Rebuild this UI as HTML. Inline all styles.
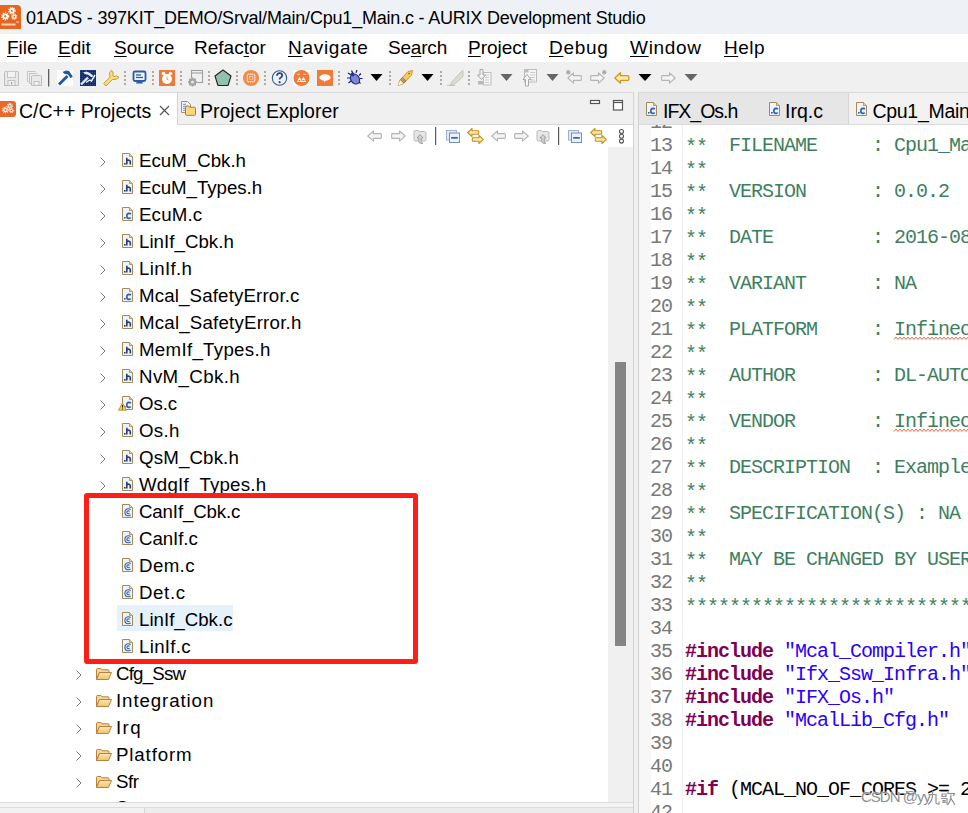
<!DOCTYPE html>
<html><head><meta charset="utf-8">
<style>
*{box-sizing:border-box;margin:0;padding:0}
html,body{width:968px;height:813px;overflow:hidden;background:#fff}
body{position:relative;font-family:"Liberation Sans",sans-serif;color:#000}
.a{position:absolute}
.t{position:absolute;white-space:pre;font-size:18px;line-height:27px;height:27px}
#title{left:0;top:0;width:968px;height:34px;background:#eef2f7}
#menu{left:0;top:34px;width:968px;height:28px;background:#fff}
#tb{left:0;top:62px;width:968px;height:31px;background:#f0f0f0}
.mi{position:absolute;top:0;font-size:19px;line-height:28px;white-space:pre}
.mi u{text-decoration:underline;text-underline-offset:2px;text-decoration-thickness:1px}
.code{position:absolute;font-family:"Liberation Mono",monospace;font-size:20px;letter-spacing:-1px;line-height:23px;white-space:pre;height:23px}
.ln{color:#787878;left:651px}
.cm{color:#3f7f5f}
.kw{color:#7f0055;font-weight:bold}
.st{color:#2a00ff}
.ast{position:relative;top:1.5px}
.clip{position:absolute;left:0;top:0;width:968px;height:813px}
</style></head>
<body>
<svg width="0" height="0" style="position:absolute">
<defs>
 <linearGradient id="gfold" x1="0" y1="0" x2="0" y2="1"><stop offset="0" stop-color="#fbe7b5"/><stop offset="1" stop-color="#f0c468"/></linearGradient>
 <symbol id="ih" viewBox="0 0 12 15">
  <path d="M0.5 0.5H7.5L10.5 3.5V13.5H0.5Z" fill="#eef2fa" stroke="#a48a56" stroke-width="1"/>
  <path d="M7.5 0.5V3.5H10.5" fill="#e6d3a0" stroke="#a48a56" stroke-width="0.8"/>
  <rect x="2" y="10" width="1.6" height="1.6" fill="#23407a"/>
  <path d="M4.8 4.8V11.6M4.8 8Q5.8 7 7 7.2Q8.3 7.4 8.3 8.8V11.6" fill="none" stroke="#23407a" stroke-width="1.6"/>
 </symbol>
 <symbol id="ic" viewBox="0 0 12 15">
  <path d="M0.5 0.5H7.5L10.5 3.5V13.5H0.5Z" fill="#eef2fa" stroke="#a48a56" stroke-width="1"/>
  <path d="M7.5 0.5V3.5H10.5" fill="#e6d3a0" stroke="#a48a56" stroke-width="0.8"/>
  <rect x="2" y="10" width="1.6" height="1.6" fill="#2f5fa6"/>
  <path d="M8.8 7.2Q8.2 6.3 7 6.4Q4.8 6.6 4.8 8.9Q4.8 11.3 7 11.4Q8.2 11.5 8.8 10.6" fill="none" stroke="#2f5fa6" stroke-width="1.6"/>
 </symbol>
 <symbol id="icw" viewBox="0 0 12 15">
  <use href="#ic"/>
 </symbol>
 <symbol id="icc" viewBox="0 0 12 15">
  <path d="M0.5 0.5H7.5L10.5 3.5V13.5H0.5Z" fill="#eef2fa" stroke="#a48a56" stroke-width="1"/>
  <path d="M7.5 0.5V3.5H10.5" fill="#e6d3a0" stroke="#a48a56" stroke-width="0.8"/>
  <path d="M8.6 5.6Q7.7 4.6 6.1 4.7Q2.9 5 2.9 8.3Q2.9 11.7 6.1 11.8Q7.7 11.9 8.6 10.9" fill="none" stroke="#2f5fa6" stroke-width="1.1"/>
  <path d="M7.6 7.3Q7.1 6.8 6.3 6.8Q4.9 6.9 4.9 8.2Q4.9 9.6 6.3 9.7Q7.1 9.7 7.6 9.2" fill="none" stroke="#2f5fa6" stroke-width="1.1"/>
 </symbol>
 <symbol id="ifold" viewBox="0 0 16 12">
  <path d="M0.5 1.5Q0.5 0.5 1.5 0.5H5L6 1.8H12Q13 1.8 13 2.8V4.5H3.5L0.5 11.5Z" fill="#f3d79a" stroke="#b7823c" stroke-width="1"/>
  <path d="M0.5 11.5L3.5 4.5H15.5L12.5 11.5Z" fill="url(#gfold)" stroke="#b7823c" stroke-width="1"/>
 </symbol>
 <symbol id="iarrL" viewBox="0 0 15 12">
  <path d="M0.8 6L6.5 0.8V3.6H13.6Q14.3 3.6 14.3 4.3V7.7Q14.3 8.4 13.6 8.4H6.5V11.2Z" fill="#f4f4f4" stroke="#b4b4b4" stroke-width="1.1" stroke-linejoin="round"/>
 </symbol>
 <symbol id="iarrR" viewBox="0 0 15 12">
  <path d="M14.2 6L8.5 0.8V3.6H1.4Q0.7 3.6 0.7 4.3V7.7Q0.7 8.4 1.4 8.4H8.5V11.2Z" fill="#f4f4f4" stroke="#b4b4b4" stroke-width="1.1" stroke-linejoin="round"/>
 </symbol>
 <symbol id="irefr" viewBox="0 0 14 15">
  <path d="M1 3Q1 1.5 2.5 1.5H5.5L6.5 2.5H11.5Q13 2.5 13 4V10.5Q13 12 11.5 12H2.5Q1 12 1 10.5Z" fill="#e6e6e6" stroke="#b9b9b9" stroke-width="1"/>
  <path d="M4 9L7 5.5L10 9H8.3V12.5Q8.3 14 10 14.3H7.5Q5.8 14 5.8 12.5V9Z" fill="#d6d6d6" stroke="#9a9a9a" stroke-width="0.9"/>
 </symbol>
 <symbol id="icoll" viewBox="0 0 14 13">
  <rect x="0.5" y="0.5" width="10" height="9.5" fill="#dfe9f8" stroke="#9fb1d3" stroke-width="1"/>
  <rect x="3.5" y="3" width="10" height="9.5" fill="#e8f2fd" stroke="#7a8fb8" stroke-width="1"/>
  <rect x="5.2" y="7.1" width="6.6" height="1.5" fill="#1e4f9c"/>
 </symbol>
 <symbol id="ilink" viewBox="0 0 17 17">
  <path d="M0.8 5L5 0.9V3.2H11Q11.7 3.2 11.7 4V6Q11.7 6.8 11 6.8H5V9Z" fill="#fbe9a6" stroke="#c58e1c" stroke-width="1.1" stroke-linejoin="round"/>
  <path d="M16.2 12L12 7.9V10.2H6Q5.3 10.2 5.3 11V13Q5.3 13.8 6 13.8H12V16.1Z" fill="#fbe9a6" stroke="#c58e1c" stroke-width="1.1" stroke-linejoin="round"/>
 </symbol>
</defs>
</svg>

<!-- title bar -->
<div id="title" class="a">
  <svg class="a" style="left:0;top:5px" width="21" height="24" viewBox="0 0 21 24">
    <path d="M0 0H17Q21 0 21 4V24H0Z" fill="#e8651f"/>
    <g fill="#fff">
     <circle cx="5.2" cy="11.3" r="2.9"/><circle cx="11.9" cy="5.7" r="2.6"/><circle cx="14.2" cy="11.7" r="2.1"/>
    </g>
    <g fill="none" stroke="#fff">
     <circle cx="5.2" cy="11.3" r="3.4" stroke-width="1.4" stroke-dasharray="1.2 1"/>
     <circle cx="11.9" cy="5.7" r="3.1" stroke-width="1.3" stroke-dasharray="1.1 0.9"/>
     <circle cx="14.2" cy="11.7" r="2.6" stroke-width="1.1" stroke-dasharray="1 0.8"/>
    </g>
    <g fill="#e8651f"><circle cx="5.2" cy="11.3" r="1.1"/><circle cx="11.9" cy="5.7" r="1"/><circle cx="14.2" cy="11.7" r="0.9"/></g>
    <path d="M1.5 19.5H15.5" stroke="#fbd3bd" stroke-width="2"/>
    <path d="M16 17H19" stroke="#fbd3bd" stroke-width="1"/>
  </svg>
  <div class="t" style="left:26px;top:5px;letter-spacing:-0.2px">01ADS - 397KIT_DEMO/Srval/Main/Cpu1_Main.c - AURIX Development Studio</div>
</div>
<!-- menu -->
<div id="menu" class="a">
  <span class="mi" style="left:7px"><u>F</u>ile</span>
  <span class="mi" style="left:58px"><u>E</u>dit</span>
  <span class="mi" style="left:114px"><u>S</u>ource</span>
  <span class="mi" style="left:194px">Refac<u>t</u>or</span>
  <span class="mi" style="left:288px;letter-spacing:0.7px"><u>N</u>avigate</span>
  <span class="mi" style="left:388px;letter-spacing:-0.2px">Se<u>a</u>rch</span>
  <span class="mi" style="left:468px"><u>P</u>roject</span>
  <span class="mi" style="left:549px;letter-spacing:0.7px"><u>D</u>ebug</span>
  <span class="mi" style="left:630px;letter-spacing:0.7px"><u>W</u>indow</span>
  <span class="mi" style="left:724px;letter-spacing:0.5px"><u>H</u>elp</span>
</div>
<!-- toolbar -->
<div id="tb" class="a"></div>
<svg class="a" style="left:0;top:62px" width="968" height="30" viewBox="0 0 968 30">
 <!-- save -->
 <g transform="translate(4,9)">
  <path d="M0.5 1.5Q0.5 0.5 1.5 0.5H13.5Q14.5 0.5 14.5 1.5V14.5H0.5Z" fill="#e9e9e9" stroke="#bdbdbd"/>
  <rect x="3.5" y="0.5" width="8" height="6" fill="#f3f3f3" stroke="#c6c6c6"/>
  <rect x="4" y="9.5" width="7" height="5" fill="#f0f0f0" stroke="#c0c0c0"/>
  <rect x="7" y="11" width="1.2" height="2.5" fill="#a0a0a0"/>
 </g>
 <g transform="translate(27,9)">
  <path d="M0.5 2.5V0.5H8.5" fill="none" stroke="#c4c4c4"/>
  <path d="M2.5 4.5V2.5H10.5" fill="none" stroke="#c4c4c4"/>
  <path d="M4.5 5.5Q4.5 4.5 5.5 4.5H13.5Q14.5 4.5 14.5 5.5V14.5H4.5Z" fill="#e9e9e9" stroke="#bdbdbd"/>
  <rect x="7" y="10.5" width="5" height="4" fill="#f0f0f0" stroke="#c0c0c0"/>
  <path d="M0.5 0.5V10.5H2.5M2.5 2.5V12.5H4.5" fill="none" stroke="#c4c4c4"/>
 </g>
 <rect x="48" y="7" width="1.3" height="17.5" fill="#5d5d5d"/>
 <!-- hammer -->
 <rect x="57" y="8" width="16" height="16" fill="#fff"/>
 <path d="M59 22.5L67.5 14" stroke="#1e56b0" stroke-width="2.8"/>
 <path d="M62.5 10L66 8.5L69 9L72.8 14.5L70.6 16.2L68 12.5L64.5 11.8Z" fill="#1e56b0"/>
 <!-- build navy -->
 <defs><pattern id="dith" width="2" height="2" patternUnits="userSpaceOnUse"><rect width="2" height="2" fill="#1a2d5c"/><rect width="1" height="1" fill="#2f4a86"/></pattern></defs>
 <rect x="80" y="8" width="16" height="16" fill="url(#dith)"/>
 <path d="M81 22.5L88 15.5" stroke="#dfe7f6" stroke-width="2.4"/>
 <path d="M83 10.5L86.5 9.5L90 11L93.5 14L91.5 15.2L88.5 13L85 12Z" fill="#e6ecf8"/>
 <path d="M86 20.5L89.5 18L91.5 19L95 13" stroke="#e6ecf8" stroke-width="1.5" fill="none"/>
 <!-- wrench -->
 <path d="M103.8 21.5L110 15.2L109.5 10.8L111.5 8.3L113.2 10.8L112.8 13.6L114 14.6L116.5 14L119 15.3L116.2 17.3L112.3 17.5L106 24Z" fill="#f8df86" stroke="#cf9a1f" stroke-width="1" stroke-linejoin="round"/>
 <!-- dotted separators -->
 <g fill="#b3aa98">
  <g id="dots"><rect x="124" y="9" width="2" height="2"/><rect x="124" y="13" width="2" height="2"/><rect x="124" y="17" width="2" height="2"/><rect x="124" y="21" width="2" height="2"/></g>
  <use href="#dots" x="28"/><use href="#dots" x="56"/><use href="#dots" x="84"/><use href="#dots" x="112"/><use href="#dots" x="140"/>
  <use href="#dots" x="214"/><use href="#dots" x="265"/><use href="#dots" x="316"/><use href="#dots" x="344"/>
 </g>
 <!-- monitor -->
 <rect x="133.5" y="9.5" width="12" height="9.5" rx="1.5" fill="#eef4fc" stroke="#2c5aa6" stroke-width="1.8"/>
 <rect x="136" y="12.3" width="5" height="1.3" fill="#2c5aa6"/><rect x="136" y="14.8" width="7" height="1.3" fill="#2c5aa6"/>
 <path d="M136 21.5H143L142 19.5H137Z" fill="#2c5aa6"/>
 <!-- alarm orange -->
 <rect x="159" y="8" width="16" height="16" fill="#ef7a37"/>
 <circle cx="167" cy="17" r="5" fill="#fff"/>
 <circle cx="163.5" cy="11.5" r="1.8" fill="#fff"/><circle cx="170.5" cy="11.5" r="1.8" fill="#fff"/>
 <path d="M167 14.5V17.3L168.6 18.2" stroke="#ef7a37" stroke-width="0.8" fill="none"/>
 <!-- window gear gray -->
 <rect x="191.5" y="8.5" width="11" height="12" fill="none" stroke="#a0a0a0" stroke-width="1.1"/>
 <path d="M191.5 11H202.5" stroke="#a0a0a0" stroke-width="1.1"/>
 <rect x="188" y="16" width="9" height="8" fill="#f0f0f0"/>
 <circle cx="192.5" cy="20" r="3.8" fill="#a3a3a3"/>
 <path d="M188 20H197M192.5 15.5V24.5M189.3 16.8L195.7 23.2M195.7 16.8L189.3 23.2" stroke="#a3a3a3" stroke-width="1.6"/>
 <circle cx="192.5" cy="20" r="1.6" fill="#e6e6e6"/>
 <!-- pentagon -->
 <path d="M223 8L231 14L228 23.5H218L215 14Z" fill="#93c1b0" stroke="#222" stroke-width="1.1" stroke-linejoin="round"/>
 <!-- orange chip circle -->
 <circle cx="251" cy="16" r="8" fill="#f38a48"/>
 <rect x="247.5" y="12.5" width="7" height="7" fill="none" stroke="#fbd2b5" stroke-width="1"/>
 <rect x="249.5" y="14.5" width="3" height="3" fill="none" stroke="#fbd2b5" stroke-width="0.8"/>
 <path d="M248.5 11V12.5M250.5 11V12.5M252.5 11V12.5M248.5 19.5V21M250.5 19.5V21M252.5 19.5V21M246 14H247.5M246 16H247.5M246 18H247.5M254.5 14H256M254.5 16H256M254.5 18H256" stroke="#fbd2b5" stroke-width="0.7"/>
 <!-- help -->
 <circle cx="279.5" cy="16" r="7.2" fill="#eef2f8" stroke="#3a5a8a" stroke-width="1.1"/>
 <path d="M277 13.8Q277 11.2 279.6 11.2Q282.2 11.2 282.2 13.5Q282.2 15 280.5 15.8Q279.6 16.3 279.6 17.6" fill="none" stroke="#2d4a78" stroke-width="1.8"/>
 <circle cx="279.6" cy="20.2" r="1.1" fill="#2d4a78"/>
 <!-- orange circle 2 -->
 <rect x="293" y="8" width="17" height="16" fill="#fff"/>
 <circle cx="301.5" cy="16" r="8" fill="#f07a36"/>
 <path d="M297 19.5H306M298 18.5L299.5 16L301 18.5M302 18.5L303.5 16L305 18.5" stroke="#fff" stroke-width="1.2" fill="none"/>
 <path d="M297 12.3H299.8M303 12.3H306" stroke="#fbc6a3" stroke-width="1.2"/>
 <!-- speech orange -->
 <rect x="317" y="8" width="16" height="16" fill="#ef7b37"/>
 <ellipse cx="325" cy="15.5" rx="5.6" ry="3.2" fill="#fff"/>
 <path d="M323.5 18L324.5 20.5L326 18Z" fill="#fff"/>
 <!-- bug -->
 <path d="M348 11L351 13M361 11.5L359 13.5M347 16H350M360 16.5H362.5M348.5 21L351 19M360.5 21.5L358.5 19.5M351.5 8.5L353 11.5M357 8L356 10.8" stroke="#1a1f6e" stroke-width="1.2"/>
 <ellipse cx="355" cy="17" rx="4.2" ry="5.4" transform="rotate(-35 355 17)" fill="#7d88d6" stroke="#1f2b8a" stroke-width="1.1"/>
 <circle cx="352.5" cy="12.5" r="2" fill="#2a3596"/>
 <!-- dropdowns -->
 <path d="M370.5 12H382.5L376.5 19Z" fill="#000"/>
 <path d="M421.5 12H433.5L427.5 19Z" fill="#000"/>
 <path d="M500.5 12H512.5L506.5 19Z" fill="#666"/>
 <path d="M546.5 12H558.5L552.5 19Z" fill="#666"/>
 <path d="M638.5 12H651.5L645 19Z" fill="#000"/>
 <path d="M684.5 12H697.5L691 19Z" fill="#666"/>
 <!-- pen yellow -->
 <path d="M398 23.5L400 18L408 9.5L412.5 8.5L411.6 13L403.5 21.5Z" fill="#f5c95a" stroke="#c98f27" stroke-width="0.9"/>
 <path d="M400.5 17.5L404 21L406 19L402.5 15.5Z" fill="#a7a2a0" stroke="#6f6a66" stroke-width="0.7"/>
 <path d="M398 23.5L400.3 18.5L403 21.3Z" fill="#fffbe0"/>
 <circle cx="409" cy="11.5" r="0.8" fill="#2f5fa6"/>
 <!-- gray pen -->
 <path d="M447 23.5H455" stroke="#c2c2c2" stroke-width="1"/>
 <path d="M450 23L453 18.5L461 10L463 8.5V14.5L456 21L452 23Z" fill="#dcdcd2" stroke="#bfbfb8" stroke-width="0.9"/>
 <!-- import gray -->
 <rect x="483.5" y="10.5" width="7.5" height="12.5" fill="#f6f6f6" stroke="#bdbdbd"/>
 <path d="M485 13H489M485 15.5H489M485 18H489M485 20.5H489" stroke="#c6c6c6" stroke-width="0.9"/>
 <rect x="478" y="19" width="5" height="3.5" fill="#b9b9b9"/>
 <path d="M480 7.5H483V13H485.5L481.5 17.5L477.5 13H480Z" fill="#f2f2f2" stroke="#a9a9a9" stroke-width="1"/>
 <!-- export gray -->
 <rect x="524.5" y="7.5" width="12" height="12.5" fill="#f6f6f6" stroke="#bdbdbd"/>
 <rect x="525" y="8" width="3.5" height="2.5" fill="#bdbdbd"/>
 <path d="M530 10.5H535M530 13H535M530 15.5H535M530 18H535" stroke="#c6c6c6" stroke-width="0.9"/>
 <path d="M525.5 24V17.5H523L527 12.5L531 17.5H528.5V24Z" fill="#f7f7f7" stroke="#a9a9a9" stroke-width="1"/>
 <!-- nav arrows with asterisk -->
 <use href="#iarrL" x="567" y="10" width="15" height="12"/>
 <path d="M566.5 8.5L570 12M570 8.5L566.5 12M568.2 7.8V12.7M566 10.2H570.5" stroke="#9a9a9a" stroke-width="0.9"/>
 <use href="#iarrR" x="590" y="10" width="15" height="12"/>
 <path d="M602.5 8.5L606 12M606 8.5L602.5 12M604.2 7.8V12.7M602 10.2H606.5" stroke="#9a9a9a" stroke-width="0.9"/>
 <!-- yellow back -->
 <path d="M614.8 16L620.5 10.8V13.6H627.6Q628.8 13.6 628.8 14.8V17.2Q628.8 18.4 627.6 18.4H620.5V21.2Z" fill="#fde9a8" stroke="#d29620" stroke-width="1.3" stroke-linejoin="round"/>
 <use href="#iarrR" x="661" y="10" width="15" height="12"/>
 <!-- bottom border segments -->
</svg>


<!-- ===== left view ===== -->
<div class="a" style="left:0;top:93px;width:634px;height:720px;background:#fff;border-right:1px solid #d2d2d2"></div>
<!-- tab strip -->
<div class="a" style="left:177px;top:93px;width:456px;height:32px;background:#f0f0f0;border-left:1px solid #d2d2d2;border-bottom:1px solid #d6d6d6"></div>
<svg class="a" style="left:0;top:101px" width="16" height="16" viewBox="0 0 16 16">
  <path d="M0 0H13Q16 0 16 3V13Q16 16 13 16H0Z" fill="#e8692a"/>
  <g fill="#fde6d8"><circle cx="5.5" cy="8.9" r="2.4"/><circle cx="9.8" cy="4.9" r="2.1"/><circle cx="11.4" cy="9.6" r="1.8"/></g>
  <g fill="none" stroke="#fde6d8">
   <circle cx="5.5" cy="8.9" r="2.9" stroke-width="1.2" stroke-dasharray="1 0.9"/>
   <circle cx="9.8" cy="4.9" r="2.6" stroke-width="1.1" stroke-dasharray="1 0.8"/>
   <circle cx="11.4" cy="9.6" r="2.2" stroke-width="1" stroke-dasharray="0.9 0.8"/>
  </g>
  <g fill="#e8692a"><circle cx="5.5" cy="8.9" r="0.9"/><circle cx="9.8" cy="4.9" r="0.8"/><circle cx="11.4" cy="9.6" r="0.8"/></g>
</svg>
<div class="t" style="left:19px;top:97.5px;font-size:19.5px">C/C++ Projects</div>
<svg class="a" style="left:159px;top:105px" width="11" height="11"><path d="M1 1L10 10M10 1L1 10" stroke="#555" stroke-width="1.2"/></svg>
<svg class="a" style="left:180px;top:100px" width="17" height="17" viewBox="0 0 17 17">
  <path d="M1.5 1.5H7.5L10.5 4.5V12.5H1.5Z" fill="#f3f6fc" stroke="#a69067"/>
  <path d="M3 4.3H6M3 6.3H7M3 8.3H7M3 10.3H6" stroke="#6b8fd0" stroke-width="1"/>
  <path d="M5.5 7.5Q5.5 6 7 6H8.8L9.8 7.3H14.5Q15.5 7.3 15.5 8.3V14.3Q15.5 15.3 14.5 15.3H6.5Q5.5 15.3 5.5 14.3Z" fill="#fad77e" stroke="#b8772d" stroke-width="1"/>
</svg>
<div class="t" style="left:200px;top:97.5px;font-size:19.5px">Project Explorer</div>
<!-- min / max -->
<svg class="a" style="left:589px;top:99px" width="36" height="13">
  <rect x="1.5" y="1.5" width="9" height="3" fill="#fff" stroke="#555" stroke-width="1.2"/>
  <rect x="24.5" y="1.5" width="9" height="9.5" fill="#fff" stroke="#555" stroke-width="1.2"/>
  <path d="M24.5 3.5H33.5" stroke="#555" stroke-width="1.2"/>
</svg>
<!-- panel toolbar -->
<svg class="a" style="left:360px;top:125px" width="274" height="22" viewBox="360 125 274 22">
  <use href="#iarrL" x="367" y="130" width="15" height="12"/>
  <use href="#iarrR" x="391" y="130" width="15" height="12"/>
  <use href="#irefr" x="413" y="129" width="14" height="15"/>
  <rect x="435" y="127" width="1.2" height="18" fill="#5d5d5d"/>
  <use href="#icoll" x="446" y="130" width="14" height="13"/>
  <use href="#ilink" x="467" y="127.5" width="17" height="17"/>
  <use href="#iarrL" x="491" y="130" width="15" height="12"/>
  <use href="#iarrR" x="514" y="130" width="15" height="12"/>
  <use href="#irefr" x="536" y="129" width="14" height="15"/>
  <rect x="558" y="127" width="1.2" height="18" fill="#5d5d5d"/>
  <use href="#icoll" x="568" y="130" width="14" height="13"/>
  <use href="#ilink" x="590" y="127.5" width="17" height="17"/>
  <g fill="none" stroke="#555" stroke-width="1.1"><circle cx="621.5" cy="131.5" r="2"/><circle cx="621.5" cy="136.3" r="2"/><circle cx="621.5" cy="141.1" r="2"/></g>
</svg>
<!-- vertical scrollbar -->
<div class="a" style="left:608px;top:147px;width:25px;height:655px;background:#f0f0f0"></div>
<div class="a" style="left:615px;top:362px;width:11px;height:284px;background:#858585"></div>
<!-- tree (clipped) -->
<div class="clip" style="clip-path:inset(147px 360px 11px 0)">
<svg class="a chev" style="left:100px;top:156.6px" width="6" height="10"><path d="M0.5 0.5L5 5L0.5 9.5" fill="none" stroke="#7a7a7a" stroke-width="1"/></svg>
<svg class="a" style="left:122px;top:152.6px" width="12" height="15"><use href="#ih" width="12" height="15"/></svg>
<div class="t" style="left:139px;top:147.2px;font-size:18.7px;letter-spacing:0px">EcuM_Cbk.h</div>
<svg class="a chev" style="left:100px;top:183.6px" width="6" height="10"><path d="M0.5 0.5L5 5L0.5 9.5" fill="none" stroke="#7a7a7a" stroke-width="1"/></svg>
<svg class="a" style="left:122px;top:179.6px" width="12" height="15"><use href="#ih" width="12" height="15"/></svg>
<div class="t" style="left:139px;top:174.2px;font-size:18.7px;letter-spacing:-0.05px">EcuM_Types.h</div>
<svg class="a chev" style="left:100px;top:210.6px" width="6" height="10"><path d="M0.5 0.5L5 5L0.5 9.5" fill="none" stroke="#7a7a7a" stroke-width="1"/></svg>
<svg class="a" style="left:122px;top:206.6px" width="12" height="15"><use href="#ic" width="12" height="15"/></svg>
<div class="t" style="left:139px;top:201.2px;font-size:18.7px;letter-spacing:0.16px">EcuM.c</div>
<svg class="a chev" style="left:100px;top:237.6px" width="6" height="10"><path d="M0.5 0.5L5 5L0.5 9.5" fill="none" stroke="#7a7a7a" stroke-width="1"/></svg>
<svg class="a" style="left:122px;top:233.6px" width="12" height="15"><use href="#ih" width="12" height="15"/></svg>
<div class="t" style="left:139px;top:228.2px;font-size:18.7px;letter-spacing:0.03px">LinIf_Cbk.h</div>
<svg class="a chev" style="left:100px;top:264.6px" width="6" height="10"><path d="M0.5 0.5L5 5L0.5 9.5" fill="none" stroke="#7a7a7a" stroke-width="1"/></svg>
<svg class="a" style="left:122px;top:260.6px" width="12" height="15"><use href="#ih" width="12" height="15"/></svg>
<div class="t" style="left:139px;top:255.2px;font-size:18.7px;letter-spacing:0.33px">LinIf.h</div>
<svg class="a chev" style="left:100px;top:291.6px" width="6" height="10"><path d="M0.5 0.5L5 5L0.5 9.5" fill="none" stroke="#7a7a7a" stroke-width="1"/></svg>
<svg class="a" style="left:122px;top:287.6px" width="12" height="15"><use href="#ic" width="12" height="15"/></svg>
<div class="t" style="left:139px;top:282.2px;font-size:18.7px;letter-spacing:0.15px">Mcal_SafetyError.c</div>
<svg class="a chev" style="left:100px;top:318.6px" width="6" height="10"><path d="M0.5 0.5L5 5L0.5 9.5" fill="none" stroke="#7a7a7a" stroke-width="1"/></svg>
<svg class="a" style="left:122px;top:314.6px" width="12" height="15"><use href="#ih" width="12" height="15"/></svg>
<div class="t" style="left:139px;top:309.2px;font-size:18.7px;letter-spacing:0.2px">Mcal_SafetyError.h</div>
<svg class="a chev" style="left:100px;top:345.6px" width="6" height="10"><path d="M0.5 0.5L5 5L0.5 9.5" fill="none" stroke="#7a7a7a" stroke-width="1"/></svg>
<svg class="a" style="left:122px;top:341.6px" width="12" height="15"><use href="#ih" width="12" height="15"/></svg>
<div class="t" style="left:139px;top:336.2px;font-size:18.7px;letter-spacing:0.3px">MemIf_Types.h</div>
<svg class="a chev" style="left:100px;top:372.6px" width="6" height="10"><path d="M0.5 0.5L5 5L0.5 9.5" fill="none" stroke="#7a7a7a" stroke-width="1"/></svg>
<svg class="a" style="left:122px;top:368.6px" width="12" height="15"><use href="#ih" width="12" height="15"/></svg>
<div class="t" style="left:139px;top:363.2px;font-size:18.7px;letter-spacing:0.38px">NvM_Cbk.h</div>
<svg class="a chev" style="left:100px;top:399.6px" width="6" height="10"><path d="M0.5 0.5L5 5L0.5 9.5" fill="none" stroke="#7a7a7a" stroke-width="1"/></svg>
<svg class="a" style="left:122px;top:395.6px" width="12" height="15"><use href="#icw" width="12" height="15"/></svg>
<svg class="a" style="left:118px;top:401.6px" width="9" height="9"><path d="M4.5 0.8L8.4 8.2H0.6Z" fill="#f7cf5c" stroke="#c98a1c" stroke-width="0.9" stroke-linejoin="round"/><path d="M4.5 3V5.6M4.5 6.5V7.5" stroke="#222" stroke-width="1.1"/></svg>
<div class="t" style="left:139px;top:390.2px;font-size:18.7px;letter-spacing:-0.1px">Os.c</div>
<svg class="a chev" style="left:100px;top:426.6px" width="6" height="10"><path d="M0.5 0.5L5 5L0.5 9.5" fill="none" stroke="#7a7a7a" stroke-width="1"/></svg>
<svg class="a" style="left:122px;top:422.6px" width="12" height="15"><use href="#ih" width="12" height="15"/></svg>
<div class="t" style="left:139px;top:417.2px;font-size:18.7px;letter-spacing:0.33px">Os.h</div>
<svg class="a chev" style="left:100px;top:453.6px" width="6" height="10"><path d="M0.5 0.5L5 5L0.5 9.5" fill="none" stroke="#7a7a7a" stroke-width="1"/></svg>
<svg class="a" style="left:122px;top:449.6px" width="12" height="15"><use href="#ih" width="12" height="15"/></svg>
<div class="t" style="left:139px;top:444.2px;font-size:18.7px;letter-spacing:0.15px">QsM_Cbk.h</div>
<svg class="a chev" style="left:100px;top:480.6px" width="6" height="10"><path d="M0.5 0.5L5 5L0.5 9.5" fill="none" stroke="#7a7a7a" stroke-width="1"/></svg>
<svg class="a" style="left:122px;top:476.6px" width="12" height="15"><use href="#ih" width="12" height="15"/></svg>
<div class="t" style="left:139px;top:471.2px;font-size:18.7px;letter-spacing:0.2px">WdgIf_Types.h</div>
<svg class="a" style="left:122px;top:503.6px" width="12" height="15"><use href="#icc" width="12" height="15"/></svg>
<div class="t" style="left:139px;top:498.2px;font-size:18.7px;letter-spacing:-0.14px">CanIf_Cbk.c</div>
<svg class="a" style="left:122px;top:530.6px" width="12" height="15"><use href="#icc" width="12" height="15"/></svg>
<div class="t" style="left:139px;top:525.2px;font-size:18.7px;letter-spacing:-0.07px">CanIf.c</div>
<svg class="a" style="left:122px;top:557.6px" width="12" height="15"><use href="#icc" width="12" height="15"/></svg>
<div class="t" style="left:139px;top:552.2px;font-size:18.7px;letter-spacing:0.38px">Dem.c</div>
<svg class="a" style="left:122px;top:584.6px" width="12" height="15"><use href="#icc" width="12" height="15"/></svg>
<div class="t" style="left:139px;top:579.2px;font-size:18.7px;letter-spacing:0.6px">Det.c</div>
<div class="a" style="left:117px;top:605.0px;width:116px;height:26px;background:#e5f1fb"></div>
<svg class="a" style="left:122px;top:611.6px" width="12" height="15"><use href="#icc" width="12" height="15"/></svg>
<div class="t" style="left:139px;top:606.2px;font-size:18.7px;letter-spacing:0px">LinIf_Cbk.c</div>
<svg class="a" style="left:122px;top:638.6px" width="12" height="15"><use href="#icc" width="12" height="15"/></svg>
<div class="t" style="left:139px;top:633.2px;font-size:18.7px;letter-spacing:0.3px">LinIf.c</div>
<svg class="a chev" style="left:76px;top:669.6px" width="6" height="10"><path d="M0.5 0.5L5 5L0.5 9.5" fill="none" stroke="#7a7a7a" stroke-width="1"/></svg>
<svg class="a" style="left:96px;top:667.6px" width="16" height="12"><use href="#ifold" width="16" height="12"/></svg>
<div class="t" style="left:116px;top:660.2px;font-size:18.7px;letter-spacing:-0.8px">Cfg_Ssw</div>
<svg class="a chev" style="left:76px;top:696.6px" width="6" height="10"><path d="M0.5 0.5L5 5L0.5 9.5" fill="none" stroke="#7a7a7a" stroke-width="1"/></svg>
<svg class="a" style="left:96px;top:694.6px" width="16" height="12"><use href="#ifold" width="16" height="12"/></svg>
<div class="t" style="left:116px;top:687.2px;font-size:18.7px;letter-spacing:0.9px">Integration</div>
<svg class="a chev" style="left:76px;top:723.6px" width="6" height="10"><path d="M0.5 0.5L5 5L0.5 9.5" fill="none" stroke="#7a7a7a" stroke-width="1"/></svg>
<svg class="a" style="left:96px;top:721.6px" width="16" height="12"><use href="#ifold" width="16" height="12"/></svg>
<div class="t" style="left:116px;top:714.2px;font-size:18.7px;letter-spacing:1.4px">Irq</div>
<svg class="a chev" style="left:76px;top:750.6px" width="6" height="10"><path d="M0.5 0.5L5 5L0.5 9.5" fill="none" stroke="#7a7a7a" stroke-width="1"/></svg>
<svg class="a" style="left:96px;top:748.6px" width="16" height="12"><use href="#ifold" width="16" height="12"/></svg>
<div class="t" style="left:116px;top:741.2px;font-size:18.7px;letter-spacing:0.86px">Platform</div>
<svg class="a chev" style="left:76px;top:777.6px" width="6" height="10"><path d="M0.5 0.5L5 5L0.5 9.5" fill="none" stroke="#7a7a7a" stroke-width="1"/></svg>
<svg class="a" style="left:96px;top:775.6px" width="16" height="12"><use href="#ifold" width="16" height="12"/></svg>
<div class="t" style="left:116px;top:768.2px;font-size:18.7px;letter-spacing:-0.4px">Sfr</div>
<div class="t" style="left:116px;top:794.0px;font-size:18.7px;letter-spacing:0px">Ssw</div>
</div>
<!-- red box -->
<div class="a" style="left:84px;top:493px;width:334px;height:171px;border:5px solid #ff1f17;border-radius:3px"></div>
<!-- horizontal scrollbar -->
<div class="a" style="left:0;top:802px;width:633px;height:1px;background:#dadada"></div>
<div class="a" style="left:0;top:803px;width:633px;height:10px;background:#f4f4f4"></div>
<div class="a" style="left:0;top:807px;width:633px;height:6px;background:#ececec;border-top:1px solid #dcdcdc"></div>
<div class="a" style="left:0;top:808px;width:145px;height:5px;background:#f2f2f2;border-right:1px solid #d8d8d8"></div>

<!-- sash -->
<div class="a" style="left:634px;top:92px;width:4px;height:721px;background:#f0f0f0"></div>
<div class="a" style="left:0;top:92px;width:634px;height:1px;background:#d9d9d9"></div>
<div class="a" style="left:638px;top:92px;width:330px;height:1px;background:#d9d9d9"></div>
<!-- ===== editor ===== -->
<div class="a" style="left:638px;top:93px;width:330px;height:720px;background:#fff;border-left:1px solid #d2d2d2"></div>
<div class="a" style="left:639px;top:93px;width:329px;height:32px;background:#e6e6e6;border-bottom:1px solid #dadada"></div>
<div class="a" style="left:848px;top:93px;width:120px;height:31px;background:#f2f2f2;border-left:1px solid #d6d6d6"></div>
<svg class="a" style="left:646px;top:102px" width="12" height="15"><use href="#ic" width="12" height="15"/></svg>
<div class="t" style="left:663px;top:97.5px;font-size:19.5px;letter-spacing:-1px">IFX_Os.h</div>
<svg class="a" style="left:769px;top:102px" width="12" height="15"><use href="#ic" width="12" height="15"/></svg>
<div class="t" style="left:785px;top:97.5px;font-size:19.5px">Irq.c</div>
<svg class="a" style="left:856px;top:102px" width="12" height="15"><use href="#ic" width="12" height="15"/></svg>
<div class="t" style="left:872.5px;top:97.5px;font-size:19.5px;letter-spacing:-0.3px">Cpu1_Main.c</div>
<div class="a" style="left:639px;top:125px;width:12px;height:688px;background:#f7f7f7"></div>
<div class="a" style="left:682px;top:125px;width:1px;height:688px;background:#f0f0f0"></div>
<div class="clip" style="clip-path:inset(125px 0 0 639px)">
<div class="code ln" style="left:650px;top:111.0px">12</div>
<div class="code" style="left:685px;top:111.0px"><span class="cm"><span class="ast">**</span></span></div>
<div class="code ln" style="left:650px;top:134.0px">13</div>
<div class="code" style="left:685px;top:134.0px"><span class="cm"><span class="ast">**</span>  FILENAME     : Cpu1_Main.c</span></div>
<div class="code ln" style="left:650px;top:157.0px">14</div>
<div class="code" style="left:685px;top:157.0px"><span class="cm"><span class="ast">**</span></span></div>
<div class="code ln" style="left:650px;top:180.0px">15</div>
<div class="code" style="left:685px;top:180.0px"><span class="cm"><span class="ast">**</span>  VERSION      : 0.0.2</span></div>
<div class="code ln" style="left:650px;top:203.0px">16</div>
<div class="code" style="left:685px;top:203.0px"><span class="cm"><span class="ast">**</span></span></div>
<div class="code ln" style="left:650px;top:226.0px">17</div>
<div class="code" style="left:685px;top:226.0px"><span class="cm"><span class="ast">**</span>  DATE         : 2016-08-05</span></div>
<div class="code ln" style="left:650px;top:249.0px">18</div>
<div class="code" style="left:685px;top:249.0px"><span class="cm"><span class="ast">**</span></span></div>
<div class="code ln" style="left:650px;top:272.0px">19</div>
<div class="code" style="left:685px;top:272.0px"><span class="cm"><span class="ast">**</span>  VARIANT      : NA</span></div>
<div class="code ln" style="left:650px;top:295.0px">20</div>
<div class="code" style="left:685px;top:295.0px"><span class="cm"><span class="ast">**</span></span></div>
<div class="code ln" style="left:650px;top:318.0px">21</div>
<div class="code" style="left:685px;top:318.0px"><span class="cm"><span class="ast">**</span>  PLATFORM     : Infineon</span></div>
<div class="code ln" style="left:650px;top:341.0px">22</div>
<div class="code" style="left:685px;top:341.0px"><span class="cm"><span class="ast">**</span></span></div>
<div class="code ln" style="left:650px;top:364.0px">23</div>
<div class="code" style="left:685px;top:364.0px"><span class="cm"><span class="ast">**</span>  AUTHOR       : DL-AUTOSAR</span></div>
<div class="code ln" style="left:650px;top:387.0px">24</div>
<div class="code" style="left:685px;top:387.0px"><span class="cm"><span class="ast">**</span></span></div>
<div class="code ln" style="left:650px;top:410.0px">25</div>
<div class="code" style="left:685px;top:410.0px"><span class="cm"><span class="ast">**</span>  VENDOR       : Infineon</span></div>
<div class="code ln" style="left:650px;top:433.0px">26</div>
<div class="code" style="left:685px;top:433.0px"><span class="cm"><span class="ast">**</span></span></div>
<div class="code ln" style="left:650px;top:456.0px">27</div>
<div class="code" style="left:685px;top:456.0px"><span class="cm"><span class="ast">**</span>  DESCRIPTION  : Example</span></div>
<div class="code ln" style="left:650px;top:479.0px">28</div>
<div class="code" style="left:685px;top:479.0px"><span class="cm"><span class="ast">**</span></span></div>
<div class="code ln" style="left:650px;top:502.0px">29</div>
<div class="code" style="left:685px;top:502.0px"><span class="cm"><span class="ast">**</span>  SPECIFICATION(S) : NA</span></div>
<div class="code ln" style="left:650px;top:525.0px">30</div>
<div class="code" style="left:685px;top:525.0px"><span class="cm"><span class="ast">**</span></span></div>
<div class="code ln" style="left:650px;top:548.0px">31</div>
<div class="code" style="left:685px;top:548.0px"><span class="cm"><span class="ast">**</span>  MAY BE CHANGED BY USER</span></div>
<div class="code ln" style="left:650px;top:571.0px">32</div>
<div class="code" style="left:685px;top:571.0px"><span class="cm"><span class="ast">**</span></span></div>
<div class="code ln" style="left:650px;top:594.0px">33</div>
<div class="code" style="left:685px;top:594.0px"><span class="cm"><span class="ast">******************************</span></span></div>
<div class="code ln" style="left:650px;top:617.0px">34</div>
<div class="code ln" style="left:650px;top:640.0px">35</div>
<div class="code" style="left:685px;top:640.0px"><span class="kw">#include</span> <span class="st">"Mcal_Compiler.h"</span></div>
<div class="code ln" style="left:650px;top:663.0px">36</div>
<div class="code" style="left:685px;top:663.0px"><span class="kw">#include</span> <span class="st">"Ifx_Ssw_Infra.h"</span></div>
<div class="code ln" style="left:650px;top:686.0px">37</div>
<div class="code" style="left:685px;top:686.0px"><span class="kw">#include</span> <span class="st">"IFX_Os.h"</span></div>
<div class="code ln" style="left:650px;top:709.0px">38</div>
<div class="code" style="left:685px;top:709.0px"><span class="kw">#include</span> <span class="st">"McalLib_Cfg.h"</span></div>
<div class="code ln" style="left:650px;top:732.0px">39</div>
<div class="code ln" style="left:650px;top:755.0px">40</div>
<div class="code ln" style="left:650px;top:778.0px">41</div>
<div class="code" style="left:685px;top:778.0px"><span class="kw">#if</span> (MCAL_NO_OF_CORES >= 2</div>
<div class="code ln" style="left:650px;top:801.0px">42</div>
</div>
<svg class="a" style="left:0;top:0" width="968" height="813"><g fill="none" stroke="#f8683c" stroke-width="1"><polyline points="894.0,339.5 896.0,337 898.0,339.5 900.0,337 902.0,339.5 904.0,337 906.0,339.5 908.0,337 910.0,339.5 912.0,337 914.0,339.5 916.0,337 918.0,339.5 920.0,337 922.0,339.5 924.0,337 926.0,339.5 928.0,337 930.0,339.5 932.0,337 934.0,339.5 936.0,337 938.0,339.5 940.0,337 942.0,339.5 944.0,337 946.0,339.5 948.0,337 950.0,339.5 952.0,337 954.0,339.5 956.0,337 958.0,339.5 960.0,337 962.0,339.5 964.0,337 966.0,339.5 968.0,337 970.0,339.5"/><polyline points="894.0,431.5 896.0,429.0 898.0,431.5 900.0,429.0 902.0,431.5 904.0,429.0 906.0,431.5 908.0,429.0 910.0,431.5 912.0,429.0 914.0,431.5 916.0,429.0 918.0,431.5 920.0,429.0 922.0,431.5 924.0,429.0 926.0,431.5 928.0,429.0 930.0,431.5 932.0,429.0 934.0,431.5 936.0,429.0 938.0,431.5 940.0,429.0 942.0,431.5 944.0,429.0 946.0,431.5 948.0,429.0 950.0,431.5 952.0,429.0 954.0,431.5 956.0,429.0 958.0,431.5 960.0,429.0 962.0,431.5 964.0,429.0 966.0,431.5 968.0,429.0 970.0,431.5"/></g></svg>
<!-- watermark -->
<div class="a" style="left:861px;top:788px;font-size:15px;line-height:18px;color:#8f8f8f;white-space:pre;letter-spacing:-1px;text-shadow:0 0 1px #fff,0 0 2px #fff">CSDN @yy</div>
<svg class="a" style="left:927px;top:789px" width="30" height="17"><g fill="none" stroke="#8f8f8f" stroke-width="1.2"><path d="M1.5 5.5H9V13.5Q9 15 10.5 15H12V12.5M5.5 1.5V6Q5.5 12 1 15.5"/><path d="M14 2.5H20M15 5H19V7.5H15ZM14 9.5H20V15.5M16 11.5H18V13.5H16ZM21.5 1.5L20.8 5M21 4.5H27.5L26.5 7M24 5.5Q24 12 20.5 16M24 9.5L28 16"/></g></svg>
</body></html>
